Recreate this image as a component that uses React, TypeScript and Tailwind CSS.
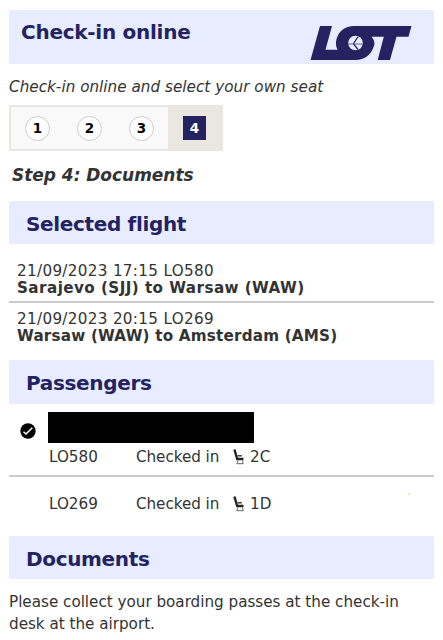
import type { ReactNode } from "react";

function Panel({ children, className }: { children: ReactNode; className: string }) {
  return (
    <h2 className={`flex rounded-[2px] bg-[#e7edfe] pl-[17px] text-[20px] leading-[46px] font-bold tracking-[-0.34px] text-[#252262] ${className}`}>
      {children}
    </h2>
  );
}

function Logo() {
  return (
    <svg width="102" height="36" viewBox="0 0 102 36" className="mt-[15px] mr-[22px]" role="img" aria-label="LOT">
      <path
        fill="#252262"
        fillRule="evenodd"
        d="M10 1H22L15.500 24.700H27.500Q25 20 26.500 14C29 6 35 1 44 1H101.500L98.500 11.700H86.500L80 35H67.700L73.800 11.700H61.500Q65.500 16 64 21C61 30 54 35 46 35H.5ZM45.500 10.700A7.300 7.300 0 1 0 45.500 25.300A7.300 7.300 0 1 0 45.500 10.700Z"
      />
      <path d="M43.500 18.500L48.300 11.500M43.500 18.800L48 24.500" fill="none" stroke="#252262" strokeWidth="1.300" />
      <path d="M38.500 19H52.500" fill="none" stroke="#252262" strokeWidth=".7" />
    </svg>
  );
}

function Step({ n }: { n: number }) {
  return (
    <span className="flex size-[25px] items-center justify-center rounded-full border border-[#cccccc] bg-white text-[13.5px] font-bold text-black">
      {n}
    </span>
  );
}

function Seat() {
  return (
    <svg width="12" height="16" viewBox="0 0 12 16" className="mr-[5px] ml-[14px]">
      <path d="M.300 .8L2.600 .3L5 8.800H10.500V11.300H3.300Z" fill="#222" />
      <path d="M4.500 6.800H8.800" fill="none" stroke="#222" strokeWidth="1.300" />
      <path d="M5 11.500L3.800 14.700H10.200L9.500 11.500" fill="none" stroke="#555" strokeWidth=".9" />
    </svg>
  );
}

function Segment({ flight, seat }: { flight: string; seat: string }) {
  return (
    <div className="flex h-[20px] items-center pl-[40px]">
      <span className="w-[87px]">{flight}</span>
      <span className="w-[83px] tracking-[-0.06px]">Checked in</span>
      <Seat />
      <span>{seat}</span>
    </div>
  );
}

export default function App() {
  return (
    <main className="h-[640px] w-[443px] overflow-hidden bg-white px-[9px] pt-[10px] font-['DejaVu_Sans',Verdana,sans-serif] text-[15.2px] leading-[17px] whitespace-nowrap text-[#333333]">
      <header className="flex h-[54px] w-[425px] justify-between rounded-[2px] bg-[#e7edfe] pl-[12px]">
        <h1 className="text-[20px] leading-[45px] font-bold tracking-[-0.27px] text-[#252262]">Check-in online</h1>
        <Logo />
      </header>
      <p className="mt-[15px] tracking-[0.03px] italic">Check-in online and select your own seat</p>
      <div className="mt-[9px] flex h-[46px] w-[214px] border-2 border-[#e9e7e0] bg-[#f9f9f9]">
        <div className="flex w-[157px] items-center gap-[27px] pl-[14px]">
          <Step n={1} />
          <Step n={2} />
          <Step n={3} />
        </div>
        <div className="flex flex-1 items-center bg-[#e9e7e0] pl-[15px]">
          <span className="flex h-[24px] w-[23px] items-center justify-center bg-[#252262] text-[13.5px] font-bold text-white">4</span>
        </div>
      </div>
      <p className="mt-[14px] pl-[3px] text-[17px] leading-[20px] font-bold tracking-[-0.03px] italic">Step 4: Documents</p>
      <Panel className="mt-[16px] h-[43px]">Selected flight</Panel>
      <div className="mt-[19px] pl-[8px]">
        <p className="tracking-[0.32px]">21/09/2023 17:15 LO580</p>
        <p className="font-bold tracking-[0.43px]">Sarajevo (SJJ) to Warsaw (WAW)</p>
      </div>
      <hr className="mt-[4px] w-[425px] border-t-2 border-[#cccccc]" />
      <div className="mt-[8px] pl-[8px]">
        <p className="tracking-[0.32px]">21/09/2023 20:15 LO269</p>
        <p className="font-bold tracking-[0.2px]">Warsaw (WAW) to Amsterdam (AMS)</p>
      </div>
      <Panel className="mt-[15px] h-[44px]">Passengers</Panel>
      <div className="mt-[8px] flex h-[31px] items-center pl-[11px]">
        <svg width="16" height="16" viewBox="0 0 16 16" className="mt-[1px] mr-[12px] translate-y-[3px]">
          <circle cx="8" cy="8" r="7.700" fill="#000" />
          <path d="M3.500 8.800L6 11L12.300 4.800" fill="none" stroke="#fff" strokeWidth="1.500" />
        </svg>
        <div className="h-[31px] w-[206px] bg-black" />
      </div>
      <div className="mt-[4px]">
        <Segment flight="LO580" seat="2C" />
      </div>
      <hr className="mt-[8px] w-[425px] border-t-2 border-[#cccccc]" />
      <div className="relative mt-[17px]">
        <Segment flight="LO269" seat="1D" />
        <span className="absolute top-[-1px] left-[399px] size-[2px] bg-[#f3e7a6]" />
      </div>
      <Panel className="mt-[22px] h-[43px]">Documents</Panel>
      <p className="mt-[13px] leading-[21.500px] tracking-[-0.01px]">
        Please collect your boarding passes at the check-in
        <br />
        desk at the airport.
      </p>
    </main>
  );
}
